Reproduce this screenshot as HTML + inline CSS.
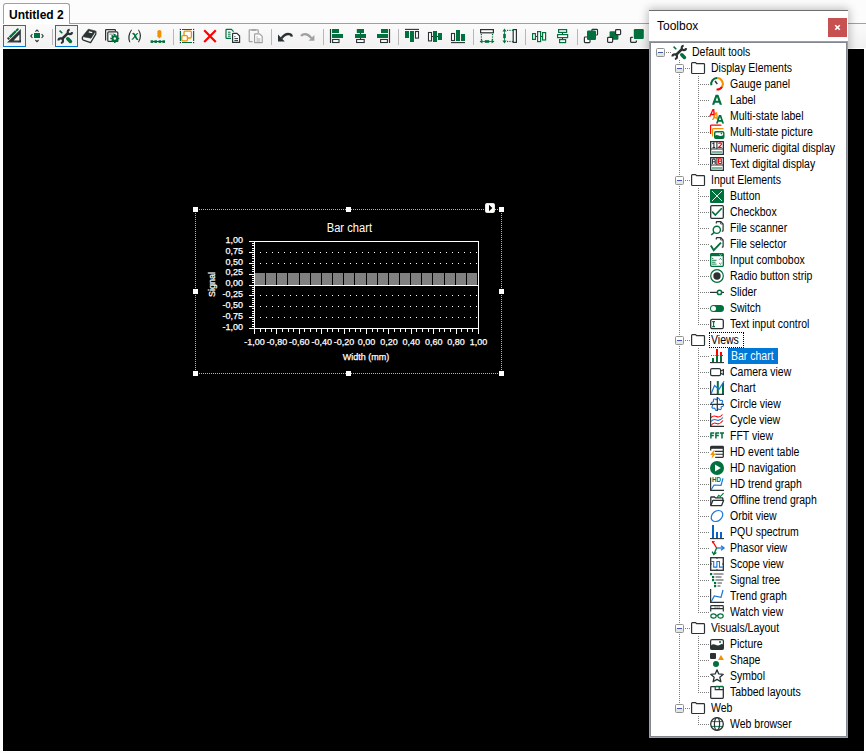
<!DOCTYPE html>
<html><head><meta charset="utf-8"><title>Untitled 2</title>
<style>
*{margin:0;padding:0;box-sizing:border-box}
html,body{width:866px;height:753px;overflow:hidden}
body{position:relative;background:#fcfcfc;font-family:"Liberation Sans",sans-serif;color:#000}
.a{position:absolute}
svg{position:absolute;overflow:visible}
.tab{left:3px;top:3px;width:67px;height:21px;border:1px solid #a0a0a0;border-bottom:none;border-radius:3px 3px 0 0;background:#fff}
.tabtxt{left:9px;top:7px;font-size:12px;font-weight:bold;line-height:16px;white-space:nowrap}
.strip{left:69px;top:23px;width:797px;height:1px;background:#a0a0a0}
.toolbar{left:0;top:24px;width:866px;height:24px;background:linear-gradient(#fbfbfb,#f1f1f1)}
.btnsel{width:23px;height:22px;top:25px;border:1px solid #0078d7;background:#f3f3f3}
.sep{top:29px;width:1px;height:16px;background:#b8b8b8}
.canvas{left:2px;top:48px;width:863px;height:704px;border:1px solid #fff;background:#000}
.win{left:649px;top:10px;width:199px;height:728px;background:#fff;border-top:1px solid #6e6e6e}
.wtitle{left:8px;top:7px;font-size:12px;line-height:16px}
.close{left:179px;top:7px;width:19px;height:19px;background:#c75050}
.tree{left:649px;top:41px;width:199px;height:697px;border:1px solid #a0a0a0;background:#fff}
.tree2{left:650px;top:42px;width:197px;height:695px;border:1px solid #828790}
.row{position:absolute;height:16px;line-height:16px;font-size:12px;white-space:nowrap;transform-origin:0 50%;transform:scaleX(0.875)}
.exp{position:absolute;width:9px;height:9px;border:1px solid #919191;border-radius:1.5px;background:linear-gradient(#fff 0,#fff 45%,#e4e4e4 55%,#e4e4e4)}
.exp::after{content:"";position:absolute;left:1px;top:3px;width:5px;height:1px;background:#3c5dae}
.vdot{position:absolute;width:1px;background:repeating-linear-gradient(#7a7a7a 0 1px,transparent 1px 2px)}
.hdot{position:absolute;height:1px;background:repeating-linear-gradient(90deg,#7a7a7a 0 1px,transparent 1px 2px)}
.sel{position:absolute;background:#0078d7}
</style></head><body>
<div class="a tab"></div>
<div class="a tabtxt">Untitled 2</div>
<div class="a strip"></div>
<div class="a toolbar"></div>
<div class="a btnsel" style="left:3px"></div>
<div class="a btnsel" style="left:55px"></div>

<div class="a sep" style="left:52px"></div>
<div class="a sep" style="left:173px"></div>
<div class="a sep" style="left:271px"></div>
<div class="a sep" style="left:323px"></div>
<div class="a sep" style="left:398px"></div>
<div class="a sep" style="left:473px"></div>
<div class="a sep" style="left:525px"></div>
<div class="a sep" style="left:577px"></div>
<svg width="16" height="16" viewBox="0 0 16 16" style="left:6px;top:28px"><path d="M1 14.6 H15 V1 Z M7.6 12.4 H13.4 V6.4 Z" fill="#2b3233" fill-rule="evenodd"/><path d="M3.6 9.4 L10 3" stroke="#00703c" stroke-width="2.4"/><path d="M10.8 2.2 L11.8 1.2" stroke="#00703c" stroke-width="2" stroke-linecap="round"/><path d="M1.8 11.2 L3.2 9.8" stroke="#2b3233" stroke-width="2.4"/><path d="M3 14.6 V13.6 M5 14.6 V13.6 M7 14.6 V13.6 M9 14.6 V13.6 M11 14.6 V13.6 M15 3 H14 M15 5 H14 M15 7 H14 M15 9 H14 M15 11 H14" stroke="#fff" stroke-width="0.6" opacity="0.6"/></svg>
<svg width="16" height="16" viewBox="0 0 16 16" style="left:29px;top:28px"><rect x="5" y="5" width="6" height="5" fill="#00703c"/><path d="M6.4 3.6 L8 2 L9.6 3.6 M3.4 6.2 L1.8 8 L3.4 9.8 M12.6 6.2 L14.2 8 L12.6 9.8 M6.4 12 L8 13.6 L9.6 12" stroke="#2b3233" stroke-width="1.1" fill="none"/></svg>
<svg width="16" height="16" viewBox="0 0 16 16" style="left:58px;top:28px"><path d="M1.6 2.6 L4.3 5.3" stroke="#00703c" stroke-width="1.5"/><path d="M9.8 10.8 L12.4 13.4" stroke="#00703c" stroke-width="3.6" stroke-linecap="round"/><path d="M4 11 L10.2 4.8" stroke="#2b3233" stroke-width="2.6"/><path d="M14.09 4.09 A2.2 2.2 0 1 1 11.71 1.71" stroke="#2b3233" stroke-width="2.1" fill="none"/><path d="M0.41 12.50 A2.3 2.3 0 1 1 2.90 14.99" stroke="#2b3233" stroke-width="2.1" fill="none"/></svg>
<svg width="16" height="16" viewBox="0 0 16 16" style="left:81px;top:28px"><path d="M1.4 8.6 L7.3 1.2 L14.7 3 L10 10.2 Z" fill="#2b3233" stroke="#2b3233" stroke-width="0.6" stroke-linejoin="round"/><path d="M1.6 8.8 Q0.7 11.4 2.4 12.2 L9.6 14.6 L14.8 6.2 V3.2" stroke="#2b3233" stroke-width="1.3" fill="none" stroke-linejoin="round"/><path d="M7.8 3.9 L11.2 4.7" stroke="#fff" stroke-width="1.3"/></svg>
<svg width="16" height="16" viewBox="0 0 16 16" style="left:104px;top:28px"><path d="M1.6 12.6 V2.2 Q1.6 1.6 2.2 1.6 H10.8 Q11.4 1.6 11.4 2.2 V3.6" stroke="#2b3233" stroke-width="1.2" fill="none"/><rect x="3.8" y="3.8" width="10" height="9.6" rx="1" fill="#fff" stroke="#2b3233" stroke-width="1.2"/><rect x="5.6" y="5.6" width="1" height="1" fill="#2b3233"/><rect x="7.4" y="5.6" width="1" height="1" fill="#2b3233"/><rect x="9.2" y="5.6" width="1" height="1" fill="#2b3233"/><circle cx="10.8" cy="10.5" r="3.2" fill="#00703c"/><rect x="10" y="6" width="1.6" height="1.8" fill="#00703c" transform="rotate(0 10.8 10.5)"/><rect x="10" y="6" width="1.6" height="1.8" fill="#00703c" transform="rotate(45 10.8 10.5)"/><rect x="10" y="6" width="1.6" height="1.8" fill="#00703c" transform="rotate(90 10.8 10.5)"/><rect x="10" y="6" width="1.6" height="1.8" fill="#00703c" transform="rotate(135 10.8 10.5)"/><rect x="10" y="6" width="1.6" height="1.8" fill="#00703c" transform="rotate(180 10.8 10.5)"/><rect x="10" y="6" width="1.6" height="1.8" fill="#00703c" transform="rotate(225 10.8 10.5)"/><rect x="10" y="6" width="1.6" height="1.8" fill="#00703c" transform="rotate(270 10.8 10.5)"/><rect x="10" y="6" width="1.6" height="1.8" fill="#00703c" transform="rotate(315 10.8 10.5)"/><circle cx="10.8" cy="10.5" r="1.2" fill="#fff"/></svg>
<svg width="16" height="16" viewBox="0 0 16 16" style="left:127px;top:28px"><path d="M4.1 1.8 Q-0.4 8 2.2 14.2 L3.3 14.2 Q1.1 8 5.1 1.8 Z" fill="#2b3233"/><path d="M12 1.8 Q16 8 12 14.2 L10.9 14.2 Q14.6 8 11 1.8 Z" fill="#2b3233"/><path d="M5.6 6 Q6.8 5.2 7.6 6.6 L9.4 10.4 Q10 11.6 11 10.8" stroke="#00703c" stroke-width="1.7" fill="none"/><path d="M11 5.6 Q10.4 5.4 9.6 6.2 L6.4 10.4 Q5.6 11.4 4.8 11" stroke="#00703c" stroke-width="1.1" fill="none"/></svg>
<svg width="16" height="16" viewBox="0 0 16 16" style="left:150px;top:28px"><path d="M7.4 3.6 Q7.4 2 9.4 2 Q11.4 2 11.4 3.6 V8.6 L9.4 10.6 L7.4 8.6 Z" fill="#f29100"/><path d="M1 13.6 H15" stroke="#2b3233" stroke-width="1"/><rect x="0.6" y="12.3" width="2.6" height="2.6" fill="#00703c"/><rect x="4.4" y="12.3" width="2.6" height="2.6" fill="#00703c"/><rect x="8.6" y="12.3" width="2.6" height="2.6" fill="#00703c"/><rect x="12.4" y="12.3" width="2.6" height="2.6" fill="#00703c"/></svg>
<svg width="16" height="16" viewBox="0 0 16 16" style="left:179px;top:28px"><path d="M3 1.5 H13 M3 14.5 H13" stroke="#00703c" stroke-width="1.2"/><path d="M1.4 3 V13 M14.6 3 V13" stroke="#00703c" stroke-width="1.2"/><rect x="0.8" y="0.9" width="1.2" height="1.2" fill="#2b3233"/><rect x="14" y="0.9" width="1.2" height="1.2" fill="#2b3233"/><rect x="0.8" y="14" width="1.2" height="1.2" fill="#2b3233"/><rect x="14" y="14" width="1.2" height="1.2" fill="#2b3233"/><rect x="5" y="3.2" width="7.4" height="6.8" rx="1.2" fill="#fff" stroke="#f29100" stroke-width="1.3"/><rect x="2.8" y="7.6" width="5.6" height="5.2" rx="1" fill="#fff" stroke="#f29100" stroke-width="1.3"/></svg>
<svg width="16" height="16" viewBox="0 0 16 16" style="left:202px;top:28px"><path d="M2.2 2.2 L13.8 14 M13.8 2.2 L2.2 14" stroke="#f00" stroke-width="2.2"/></svg>
<svg width="16" height="16" viewBox="0 0 16 16" style="left:225px;top:28px"><path d="M6 10.4 H1.6 Q1 10.4 1 9.8 V2 Q1 1.4 1.6 1.4 H6.4 L8.6 3.6" stroke="#00703c" stroke-width="1.2" fill="none"/><path d="M3 4.2 H5.6 M3 6.2 H5.6 M3 8.2 H5.6" stroke="#00703c" stroke-width="1"/><path d="M7.6 14.4 V6 Q7.6 5.4 8.2 5.4 H12 L14.6 8 V14.4 Z" fill="#fff" stroke="#2b3233" stroke-width="1.2" stroke-linejoin="round"/><path d="M9.4 8.6 H10.4 M9.4 10.6 H13 M9.4 12.6 H13" stroke="#2b3233" stroke-width="1"/></svg>
<svg width="16" height="16" viewBox="0 0 16 16" style="left:248px;top:28px"><path d="M4.6 13.6 H1.8 Q1.2 13.6 1.2 13 V2.4 Q1.2 1.8 1.8 1.8 H9.6 Q10.2 1.8 10.2 2.4 V5" stroke="#a0a0a0" stroke-width="1.2" fill="none"/><path d="M3.6 2 H8 " stroke="#a0a0a0" stroke-width="1.6"/><path d="M6.6 14.6 V6.4 Q6.6 5.8 7.2 5.8 H11.6 L14.2 8.4 V14.6 Z" fill="#fff" stroke="#a0a0a0" stroke-width="1.2" stroke-linejoin="round"/><path d="M8.4 9 H9.6 M8.4 11 H12.4 M8.4 13 H12.4" stroke="#a0a0a0" stroke-width="1"/></svg>
<svg width="16" height="16" viewBox="0 0 16 16" style="left:277px;top:28px"><path d="M4.6 10.2 Q8.6 4.6 13.4 6.4 Q14.6 7 14.8 8.6" stroke="#2b3233" stroke-width="2.4" fill="none"/><path d="M1 6.6 V13.4 H7.8 Z" fill="#2b3233"/></svg>
<svg width="16" height="16" viewBox="0 0 16 16" style="left:300px;top:28px"><path d="M11.4 10.2 Q7.4 5 2.8 6.6 Q1.6 7.2 1.4 8.2" stroke="#a0a0a0" stroke-width="2.2" fill="none"/><path d="M14.4 7 V12.8 H8.6 Z" fill="#a0a0a0"/></svg>
<svg width="16" height="16" viewBox="0 0 16 16" style="left:329px;top:28px"><path d="M1.5 1 V15" stroke="#2b3233" stroke-width="1.2"/><rect x="3" y="1" width="7" height="4" fill="#00703c"/><rect x="3" y="6" width="11" height="4" fill="#00703c"/><rect x="3.6" y="11.5" width="6.4" height="3" fill="#fff" stroke="#2b3233" stroke-width="1.1"/></svg>
<svg width="16" height="16" viewBox="0 0 16 16" style="left:352px;top:28px"><path d="M8.5 4 V12" stroke="#2b3233" stroke-width="1.1"/><rect x="4.8" y="1" width="7.2" height="4" fill="#00703c"/><rect x="3" y="6" width="11" height="4" fill="#00703c"/><rect x="4.6" y="11.5" width="7.6" height="3" fill="#fff" stroke="#2b3233" stroke-width="1.1"/></svg>
<svg width="16" height="16" viewBox="0 0 16 16" style="left:375px;top:28px"><path d="M14.5 1 V15" stroke="#2b3233" stroke-width="1.2"/><rect x="6" y="1" width="7" height="4" fill="#00703c"/><rect x="2" y="6" width="11" height="4" fill="#00703c"/><rect x="5.6" y="11.5" width="6.8" height="3" fill="#fff" stroke="#2b3233" stroke-width="1.1"/></svg>
<svg width="16" height="16" viewBox="0 0 16 16" style="left:404px;top:28px"><path d="M1 1.4 H15" stroke="#2b3233" stroke-width="1.1"/><rect x="1" y="3" width="4" height="7" fill="#00703c"/><rect x="6" y="3" width="4" height="11" fill="#00703c"/><rect x="11.5" y="3.5" width="3" height="6.6" fill="#fff" stroke="#2b3233" stroke-width="1.1"/></svg>
<svg width="16" height="16" viewBox="0 0 16 16" style="left:427px;top:28px"><path d="M4 8.5 H12" stroke="#2b3233" stroke-width="1.1"/><rect x="1.5" y="4.5" width="3" height="8.4" fill="#fff" stroke="#2b3233" stroke-width="1.1"/><rect x="6" y="3" width="4" height="11" fill="#00703c"/><rect x="11" y="5" width="4" height="7" fill="#00703c"/></svg>
<svg width="16" height="16" viewBox="0 0 16 16" style="left:450px;top:28px"><path d="M1 14.6 H15" stroke="#2b3233" stroke-width="1.1"/><rect x="1.5" y="5.5" width="3" height="7" fill="#fff" stroke="#2b3233" stroke-width="1.1"/><rect x="6" y="2" width="4" height="11" fill="#00703c"/><rect x="11" y="6" width="4" height="7" fill="#00703c"/></svg>
<svg width="16" height="16" viewBox="0 0 16 16" style="left:479px;top:28px"><rect x="1.6" y="1.6" width="12.8" height="3.2" fill="#fff" stroke="#2b3233" stroke-width="1.2"/><rect x="1.8" y="6" width="1.2" height="1.2" fill="#00703c"/><rect x="1.8" y="8.4" width="1.2" height="1.2" fill="#00703c"/><rect x="1.8" y="10.8" width="1.2" height="1.2" fill="#00703c"/><rect x="12.9" y="6" width="1.2" height="1.2" fill="#00703c"/><rect x="12.9" y="8.4" width="1.2" height="1.2" fill="#00703c"/><rect x="12.9" y="10.8" width="1.2" height="1.2" fill="#00703c"/><path d="M3 13.5 H13" stroke="#00703c" stroke-width="0.8"/><path d="M0.6 13.5 L3.4 11.4 V15.6 Z M15.4 13.5 L12.6 11.4 V15.6 Z" fill="#00703c"/><rect x="5.8" y="12.2" width="4.4" height="2.6" fill="#00703c"/></svg>
<svg width="16" height="16" viewBox="0 0 16 16" style="left:502px;top:28px"><rect x="11.2" y="1.6" width="3.2" height="12.8" fill="#fff" stroke="#2b3233" stroke-width="1.2"/><rect x="5" y="1.8" width="1.2" height="1.2" fill="#00703c"/><rect x="7.4" y="1.8" width="1.2" height="1.2" fill="#00703c"/><rect x="9.8" y="1.8" width="1.2" height="1.2" fill="#00703c"/><rect x="5" y="12.9" width="1.2" height="1.2" fill="#00703c"/><rect x="7.4" y="12.9" width="1.2" height="1.2" fill="#00703c"/><rect x="9.8" y="12.9" width="1.2" height="1.2" fill="#00703c"/><path d="M2.5 3 V13" stroke="#00703c" stroke-width="0.8"/><path d="M2.5 0.6 L0.4 3.4 H4.6 Z M2.5 15.4 L0.4 12.6 H4.6 Z" fill="#00703c"/><rect x="1.2" y="5.8" width="2.6" height="4.4" fill="#00703c"/></svg>
<svg width="16" height="16" viewBox="0 0 16 16" style="left:531px;top:28px"><path d="M4.5 8.5 H6 M10 8.5 H11" stroke="#2b3233" stroke-width="1.1"/><rect x="1.6" y="5.6" width="2.8" height="5.8" fill="#fff" stroke="#00703c" stroke-width="1.2"/><rect x="6.6" y="3.6" width="3" height="10" fill="#fff" stroke="#00703c" stroke-width="1.2"/><rect x="11.6" y="4.6" width="3" height="7.4" fill="#fff" stroke="#00703c" stroke-width="1.2"/></svg>
<svg width="16" height="16" viewBox="0 0 16 16" style="left:554px;top:28px"><path d="M8.5 4.5 V6 M8.5 10 V11" stroke="#2b3233" stroke-width="1.1"/><rect x="4.6" y="1.6" width="8" height="2.8" fill="#fff" stroke="#00703c" stroke-width="1.2"/><rect x="3.6" y="6.6" width="10" height="3" fill="#fff" stroke="#00703c" stroke-width="1.2"/><rect x="5.6" y="11.6" width="6" height="3" fill="#fff" stroke="#00703c" stroke-width="1.2"/></svg>
<svg width="16" height="16" viewBox="0 0 16 16" style="left:583px;top:28px"><rect x="8.9" y="1.4" width="5.6" height="5.6" rx="0.8" fill="#fff" stroke="#2b3233" stroke-width="1.2"/><rect x="1.4" y="9" width="5.6" height="5.6" rx="0.8" fill="#fff" stroke="#2b3233" stroke-width="1.2"/><rect x="4" y="2.6" width="9" height="9.4" rx="1.2" fill="#00703c"/></svg>
<svg width="16" height="16" viewBox="0 0 16 16" style="left:606px;top:28px"><rect x="3.6" y="3.3" width="8.8" height="8.5" rx="1" fill="#00703c"/><rect x="9.6" y="1.6" width="5" height="5" rx="0.8" fill="#fff" stroke="#2b3233" stroke-width="1.2"/><rect x="1.6" y="9.4" width="5" height="5" rx="0.8" fill="#fff" stroke="#2b3233" stroke-width="1.2"/></svg>
<svg width="16" height="16" viewBox="0 0 16 16" style="left:629px;top:28px"><path d="M3.8 9.4 H2.4 Q1.6 9.4 1.6 10.2 V13.6 Q1.6 14.4 2.4 14.4 H6.6 Q7.4 14.4 7.4 13.6 V12.4" stroke="#2b3233" stroke-width="1.3" fill="none"/><rect x="4.8" y="1" width="10" height="10" rx="1.2" fill="#00703c"/></svg>
<div class="a canvas"></div>
<svg width="866" height="753" style="left:0;top:0" shape-rendering="crispEdges">
<path d="M195 209.5 H501 M195 373.5 H501" stroke="#b4b4b4" stroke-width="1" stroke-dasharray="1 1"/>
<path d="M195.5 209 V373 M501.5 209 V373" stroke="#b4b4b4" stroke-width="1" stroke-dasharray="1 1"/>
<rect x="193" y="207" width="5" height="5" fill="#fff"/>
<rect x="346" y="207" width="5" height="5" fill="#fff"/>
<rect x="499" y="207" width="5" height="5" fill="#fff"/>
<rect x="193" y="289" width="5" height="5" fill="#fff"/>
<rect x="499" y="289" width="5" height="5" fill="#fff"/>
<rect x="193" y="371" width="5" height="5" fill="#fff"/>
<rect x="346" y="371" width="5" height="5" fill="#fff"/>
<rect x="499" y="371" width="5" height="5" fill="#fff"/>
<rect x="485.5" y="203.5" width="9" height="9" rx="1.2" fill="#fff" stroke="#e8e8e0" shape-rendering="auto"/>
<path d="M489 204.8 L492.3 208 L489 211.2 Z" fill="#000" shape-rendering="auto"/>
<rect x="255.00" y="273" width="10.15" height="12" fill="#808080"/>
<rect x="266.15" y="273" width="10.15" height="12" fill="#808080"/>
<rect x="277.30" y="273" width="10.15" height="12" fill="#808080"/>
<rect x="288.45" y="273" width="10.15" height="12" fill="#808080"/>
<rect x="299.60" y="273" width="10.15" height="12" fill="#808080"/>
<rect x="310.75" y="273" width="10.15" height="12" fill="#808080"/>
<rect x="321.90" y="273" width="10.15" height="12" fill="#808080"/>
<rect x="333.05" y="273" width="10.15" height="12" fill="#808080"/>
<rect x="344.20" y="273" width="10.15" height="12" fill="#808080"/>
<rect x="355.35" y="273" width="10.15" height="12" fill="#808080"/>
<rect x="366.50" y="273" width="10.15" height="12" fill="#808080"/>
<rect x="377.65" y="273" width="10.15" height="12" fill="#808080"/>
<rect x="388.80" y="273" width="10.15" height="12" fill="#808080"/>
<rect x="399.95" y="273" width="10.15" height="12" fill="#808080"/>
<rect x="411.10" y="273" width="10.15" height="12" fill="#808080"/>
<rect x="422.25" y="273" width="10.15" height="12" fill="#808080"/>
<rect x="433.40" y="273" width="10.15" height="12" fill="#808080"/>
<rect x="444.55" y="273" width="10.15" height="12" fill="#808080"/>
<rect x="455.70" y="273" width="10.15" height="12" fill="#808080"/>
<rect x="466.85" y="273" width="10.15" height="12" fill="#808080"/>
<rect x="260" y="252" width="1" height="1" fill="#fff"/>
<rect x="266" y="252" width="1" height="1" fill="#fff"/>
<rect x="272" y="252" width="1" height="1" fill="#fff"/>
<rect x="278" y="252" width="1" height="1" fill="#fff"/>
<rect x="284" y="252" width="1" height="1" fill="#fff"/>
<rect x="290" y="252" width="1" height="1" fill="#fff"/>
<rect x="296" y="252" width="1" height="1" fill="#fff"/>
<rect x="302" y="252" width="1" height="1" fill="#fff"/>
<rect x="308" y="252" width="1" height="1" fill="#fff"/>
<rect x="314" y="252" width="1" height="1" fill="#fff"/>
<rect x="320" y="252" width="1" height="1" fill="#fff"/>
<rect x="326" y="252" width="1" height="1" fill="#fff"/>
<rect x="332" y="252" width="1" height="1" fill="#fff"/>
<rect x="338" y="252" width="1" height="1" fill="#fff"/>
<rect x="344" y="252" width="1" height="1" fill="#fff"/>
<rect x="350" y="252" width="1" height="1" fill="#fff"/>
<rect x="356" y="252" width="1" height="1" fill="#fff"/>
<rect x="362" y="252" width="1" height="1" fill="#fff"/>
<rect x="368" y="252" width="1" height="1" fill="#fff"/>
<rect x="374" y="252" width="1" height="1" fill="#fff"/>
<rect x="380" y="252" width="1" height="1" fill="#fff"/>
<rect x="386" y="252" width="1" height="1" fill="#fff"/>
<rect x="392" y="252" width="1" height="1" fill="#fff"/>
<rect x="398" y="252" width="1" height="1" fill="#fff"/>
<rect x="404" y="252" width="1" height="1" fill="#fff"/>
<rect x="410" y="252" width="1" height="1" fill="#fff"/>
<rect x="416" y="252" width="1" height="1" fill="#fff"/>
<rect x="422" y="252" width="1" height="1" fill="#fff"/>
<rect x="428" y="252" width="1" height="1" fill="#fff"/>
<rect x="434" y="252" width="1" height="1" fill="#fff"/>
<rect x="440" y="252" width="1" height="1" fill="#fff"/>
<rect x="446" y="252" width="1" height="1" fill="#fff"/>
<rect x="452" y="252" width="1" height="1" fill="#fff"/>
<rect x="458" y="252" width="1" height="1" fill="#fff"/>
<rect x="464" y="252" width="1" height="1" fill="#fff"/>
<rect x="470" y="252" width="1" height="1" fill="#fff"/>
<rect x="476" y="252" width="1" height="1" fill="#fff"/>
<rect x="260" y="263" width="1" height="1" fill="#fff"/>
<rect x="266" y="263" width="1" height="1" fill="#fff"/>
<rect x="272" y="263" width="1" height="1" fill="#fff"/>
<rect x="278" y="263" width="1" height="1" fill="#fff"/>
<rect x="284" y="263" width="1" height="1" fill="#fff"/>
<rect x="290" y="263" width="1" height="1" fill="#fff"/>
<rect x="296" y="263" width="1" height="1" fill="#fff"/>
<rect x="302" y="263" width="1" height="1" fill="#fff"/>
<rect x="308" y="263" width="1" height="1" fill="#fff"/>
<rect x="314" y="263" width="1" height="1" fill="#fff"/>
<rect x="320" y="263" width="1" height="1" fill="#fff"/>
<rect x="326" y="263" width="1" height="1" fill="#fff"/>
<rect x="332" y="263" width="1" height="1" fill="#fff"/>
<rect x="338" y="263" width="1" height="1" fill="#fff"/>
<rect x="344" y="263" width="1" height="1" fill="#fff"/>
<rect x="350" y="263" width="1" height="1" fill="#fff"/>
<rect x="356" y="263" width="1" height="1" fill="#fff"/>
<rect x="362" y="263" width="1" height="1" fill="#fff"/>
<rect x="368" y="263" width="1" height="1" fill="#fff"/>
<rect x="374" y="263" width="1" height="1" fill="#fff"/>
<rect x="380" y="263" width="1" height="1" fill="#fff"/>
<rect x="386" y="263" width="1" height="1" fill="#fff"/>
<rect x="392" y="263" width="1" height="1" fill="#fff"/>
<rect x="398" y="263" width="1" height="1" fill="#fff"/>
<rect x="404" y="263" width="1" height="1" fill="#fff"/>
<rect x="410" y="263" width="1" height="1" fill="#fff"/>
<rect x="416" y="263" width="1" height="1" fill="#fff"/>
<rect x="422" y="263" width="1" height="1" fill="#fff"/>
<rect x="428" y="263" width="1" height="1" fill="#fff"/>
<rect x="434" y="263" width="1" height="1" fill="#fff"/>
<rect x="440" y="263" width="1" height="1" fill="#fff"/>
<rect x="446" y="263" width="1" height="1" fill="#fff"/>
<rect x="452" y="263" width="1" height="1" fill="#fff"/>
<rect x="458" y="263" width="1" height="1" fill="#fff"/>
<rect x="464" y="263" width="1" height="1" fill="#fff"/>
<rect x="470" y="263" width="1" height="1" fill="#fff"/>
<rect x="476" y="263" width="1" height="1" fill="#fff"/>
<rect x="260" y="295" width="1" height="1" fill="#fff"/>
<rect x="266" y="295" width="1" height="1" fill="#fff"/>
<rect x="272" y="295" width="1" height="1" fill="#fff"/>
<rect x="278" y="295" width="1" height="1" fill="#fff"/>
<rect x="284" y="295" width="1" height="1" fill="#fff"/>
<rect x="290" y="295" width="1" height="1" fill="#fff"/>
<rect x="296" y="295" width="1" height="1" fill="#fff"/>
<rect x="302" y="295" width="1" height="1" fill="#fff"/>
<rect x="308" y="295" width="1" height="1" fill="#fff"/>
<rect x="314" y="295" width="1" height="1" fill="#fff"/>
<rect x="320" y="295" width="1" height="1" fill="#fff"/>
<rect x="326" y="295" width="1" height="1" fill="#fff"/>
<rect x="332" y="295" width="1" height="1" fill="#fff"/>
<rect x="338" y="295" width="1" height="1" fill="#fff"/>
<rect x="344" y="295" width="1" height="1" fill="#fff"/>
<rect x="350" y="295" width="1" height="1" fill="#fff"/>
<rect x="356" y="295" width="1" height="1" fill="#fff"/>
<rect x="362" y="295" width="1" height="1" fill="#fff"/>
<rect x="368" y="295" width="1" height="1" fill="#fff"/>
<rect x="374" y="295" width="1" height="1" fill="#fff"/>
<rect x="380" y="295" width="1" height="1" fill="#fff"/>
<rect x="386" y="295" width="1" height="1" fill="#fff"/>
<rect x="392" y="295" width="1" height="1" fill="#fff"/>
<rect x="398" y="295" width="1" height="1" fill="#fff"/>
<rect x="404" y="295" width="1" height="1" fill="#fff"/>
<rect x="410" y="295" width="1" height="1" fill="#fff"/>
<rect x="416" y="295" width="1" height="1" fill="#fff"/>
<rect x="422" y="295" width="1" height="1" fill="#fff"/>
<rect x="428" y="295" width="1" height="1" fill="#fff"/>
<rect x="434" y="295" width="1" height="1" fill="#fff"/>
<rect x="440" y="295" width="1" height="1" fill="#fff"/>
<rect x="446" y="295" width="1" height="1" fill="#fff"/>
<rect x="452" y="295" width="1" height="1" fill="#fff"/>
<rect x="458" y="295" width="1" height="1" fill="#fff"/>
<rect x="464" y="295" width="1" height="1" fill="#fff"/>
<rect x="470" y="295" width="1" height="1" fill="#fff"/>
<rect x="476" y="295" width="1" height="1" fill="#fff"/>
<rect x="260" y="306" width="1" height="1" fill="#fff"/>
<rect x="266" y="306" width="1" height="1" fill="#fff"/>
<rect x="272" y="306" width="1" height="1" fill="#fff"/>
<rect x="278" y="306" width="1" height="1" fill="#fff"/>
<rect x="284" y="306" width="1" height="1" fill="#fff"/>
<rect x="290" y="306" width="1" height="1" fill="#fff"/>
<rect x="296" y="306" width="1" height="1" fill="#fff"/>
<rect x="302" y="306" width="1" height="1" fill="#fff"/>
<rect x="308" y="306" width="1" height="1" fill="#fff"/>
<rect x="314" y="306" width="1" height="1" fill="#fff"/>
<rect x="320" y="306" width="1" height="1" fill="#fff"/>
<rect x="326" y="306" width="1" height="1" fill="#fff"/>
<rect x="332" y="306" width="1" height="1" fill="#fff"/>
<rect x="338" y="306" width="1" height="1" fill="#fff"/>
<rect x="344" y="306" width="1" height="1" fill="#fff"/>
<rect x="350" y="306" width="1" height="1" fill="#fff"/>
<rect x="356" y="306" width="1" height="1" fill="#fff"/>
<rect x="362" y="306" width="1" height="1" fill="#fff"/>
<rect x="368" y="306" width="1" height="1" fill="#fff"/>
<rect x="374" y="306" width="1" height="1" fill="#fff"/>
<rect x="380" y="306" width="1" height="1" fill="#fff"/>
<rect x="386" y="306" width="1" height="1" fill="#fff"/>
<rect x="392" y="306" width="1" height="1" fill="#fff"/>
<rect x="398" y="306" width="1" height="1" fill="#fff"/>
<rect x="404" y="306" width="1" height="1" fill="#fff"/>
<rect x="410" y="306" width="1" height="1" fill="#fff"/>
<rect x="416" y="306" width="1" height="1" fill="#fff"/>
<rect x="422" y="306" width="1" height="1" fill="#fff"/>
<rect x="428" y="306" width="1" height="1" fill="#fff"/>
<rect x="434" y="306" width="1" height="1" fill="#fff"/>
<rect x="440" y="306" width="1" height="1" fill="#fff"/>
<rect x="446" y="306" width="1" height="1" fill="#fff"/>
<rect x="452" y="306" width="1" height="1" fill="#fff"/>
<rect x="458" y="306" width="1" height="1" fill="#fff"/>
<rect x="464" y="306" width="1" height="1" fill="#fff"/>
<rect x="470" y="306" width="1" height="1" fill="#fff"/>
<rect x="476" y="306" width="1" height="1" fill="#fff"/>
<rect x="260" y="317" width="1" height="1" fill="#fff"/>
<rect x="266" y="317" width="1" height="1" fill="#fff"/>
<rect x="272" y="317" width="1" height="1" fill="#fff"/>
<rect x="278" y="317" width="1" height="1" fill="#fff"/>
<rect x="284" y="317" width="1" height="1" fill="#fff"/>
<rect x="290" y="317" width="1" height="1" fill="#fff"/>
<rect x="296" y="317" width="1" height="1" fill="#fff"/>
<rect x="302" y="317" width="1" height="1" fill="#fff"/>
<rect x="308" y="317" width="1" height="1" fill="#fff"/>
<rect x="314" y="317" width="1" height="1" fill="#fff"/>
<rect x="320" y="317" width="1" height="1" fill="#fff"/>
<rect x="326" y="317" width="1" height="1" fill="#fff"/>
<rect x="332" y="317" width="1" height="1" fill="#fff"/>
<rect x="338" y="317" width="1" height="1" fill="#fff"/>
<rect x="344" y="317" width="1" height="1" fill="#fff"/>
<rect x="350" y="317" width="1" height="1" fill="#fff"/>
<rect x="356" y="317" width="1" height="1" fill="#fff"/>
<rect x="362" y="317" width="1" height="1" fill="#fff"/>
<rect x="368" y="317" width="1" height="1" fill="#fff"/>
<rect x="374" y="317" width="1" height="1" fill="#fff"/>
<rect x="380" y="317" width="1" height="1" fill="#fff"/>
<rect x="386" y="317" width="1" height="1" fill="#fff"/>
<rect x="392" y="317" width="1" height="1" fill="#fff"/>
<rect x="398" y="317" width="1" height="1" fill="#fff"/>
<rect x="404" y="317" width="1" height="1" fill="#fff"/>
<rect x="410" y="317" width="1" height="1" fill="#fff"/>
<rect x="416" y="317" width="1" height="1" fill="#fff"/>
<rect x="422" y="317" width="1" height="1" fill="#fff"/>
<rect x="428" y="317" width="1" height="1" fill="#fff"/>
<rect x="434" y="317" width="1" height="1" fill="#fff"/>
<rect x="440" y="317" width="1" height="1" fill="#fff"/>
<rect x="446" y="317" width="1" height="1" fill="#fff"/>
<rect x="452" y="317" width="1" height="1" fill="#fff"/>
<rect x="458" y="317" width="1" height="1" fill="#fff"/>
<rect x="464" y="317" width="1" height="1" fill="#fff"/>
<rect x="470" y="317" width="1" height="1" fill="#fff"/>
<rect x="476" y="317" width="1" height="1" fill="#fff"/>
<path d="M249 241.5 H479 M478.5 241 V329 M249 328.5 H479 M254.5 241 V334 M249 285.5 H479" stroke="#fff" stroke-width="1"/>
<path d="M249 241.5 H254 M251.5 243.5 H254 M251.5 245.5 H254 M251.5 248.5 H254 M251.5 250.5 H254 M249 252.5 H254 M251.5 254.5 H254 M251.5 256.5 H254 M251.5 258.5 H254 M251.5 261.5 H254 M249 263.5 H254 M251.5 265.5 H254 M251.5 267.5 H254 M251.5 269.5 H254 M251.5 271.5 H254 M249 274.5 H254 M251.5 276.5 H254 M251.5 278.5 H254 M251.5 280.5 H254 M251.5 282.5 H254 M249 285.5 H254 M251.5 287.5 H254 M251.5 289.5 H254 M251.5 291.5 H254 M251.5 293.5 H254 M249 295.5 H254 M251.5 298.5 H254 M251.5 300.5 H254 M251.5 302.5 H254 M251.5 304.5 H254 M249 306.5 H254 M251.5 308.5 H254 M251.5 311.5 H254 M251.5 313.5 H254 M251.5 315.5 H254 M249 317.5 H254 M251.5 319.5 H254 M251.5 321.5 H254 M251.5 324.5 H254 M251.5 326.5 H254 M249 328.5 H254 M254.5 329 V334 M260.5 329 V332 M265.5 329 V332 M271.5 329 V332 M276.5 329 V334 M282.5 329 V332 M288.5 329 V332 M293.5 329 V332 M299.5 329 V334 M304.5 329 V332 M310.5 329 V332 M316.5 329 V332 M321.5 329 V334 M327.5 329 V332 M332.5 329 V332 M338.5 329 V332 M344.5 329 V334 M349.5 329 V332 M355.5 329 V332 M360.5 329 V332 M366.5 329 V334 M372.5 329 V332 M377.5 329 V332 M383.5 329 V332 M388.5 329 V334 M394.5 329 V332 M400.5 329 V332 M405.5 329 V332 M411.5 329 V334 M416.5 329 V332 M422.5 329 V332 M428.5 329 V332 M433.5 329 V334 M439.5 329 V332 M444.5 329 V332 M450.5 329 V332 M456.5 329 V334 M461.5 329 V332 M467.5 329 V332 M472.5 329 V332 M478.5 329 V334" stroke="#fff" stroke-width="1"/>
</svg>
<div class="a" style="left:299px;top:220.6px;width:100px;text-align:center;color:#fff;font-size:12px;line-height:14px;white-space:nowrap"><span style="display:inline-block;transform:scaleX(0.93)">Bar chart</span></div>
<div class="a" style="left:203px;top:234.8px;width:40px;text-align:right;color:#fff;font-size:9px;line-height:11px;white-space:nowrap;-webkit-text-stroke:0.25px #fff">1,00</div>
<div class="a" style="left:203px;top:245.7px;width:40px;text-align:right;color:#fff;font-size:9px;line-height:11px;white-space:nowrap;-webkit-text-stroke:0.25px #fff">0,75</div>
<div class="a" style="left:203px;top:256.6px;width:40px;text-align:right;color:#fff;font-size:9px;line-height:11px;white-space:nowrap;-webkit-text-stroke:0.25px #fff">0,50</div>
<div class="a" style="left:203px;top:267.4px;width:40px;text-align:right;color:#fff;font-size:9px;line-height:11px;white-space:nowrap;-webkit-text-stroke:0.25px #fff">0,25</div>
<div class="a" style="left:203px;top:278.3px;width:40px;text-align:right;color:#fff;font-size:9px;line-height:11px;white-space:nowrap;-webkit-text-stroke:0.25px #fff">0,00</div>
<div class="a" style="left:203px;top:289.2px;width:40px;text-align:right;color:#fff;font-size:9px;line-height:11px;white-space:nowrap;-webkit-text-stroke:0.25px #fff">-0,25</div>
<div class="a" style="left:203px;top:300.1px;width:40px;text-align:right;color:#fff;font-size:9px;line-height:11px;white-space:nowrap;-webkit-text-stroke:0.25px #fff">-0,50</div>
<div class="a" style="left:203px;top:310.9px;width:40px;text-align:right;color:#fff;font-size:9px;line-height:11px;white-space:nowrap;-webkit-text-stroke:0.25px #fff">-0,75</div>
<div class="a" style="left:203px;top:321.8px;width:40px;text-align:right;color:#fff;font-size:9px;line-height:11px;white-space:nowrap;-webkit-text-stroke:0.25px #fff">-1,00</div>
<div class="a" style="left:234.5px;top:337.4px;width:40px;text-align:center;color:#fff;font-size:9px;line-height:11px;white-space:nowrap;-webkit-text-stroke:0.25px #fff">-1,00</div>
<div class="a" style="left:256.9px;top:337.4px;width:40px;text-align:center;color:#fff;font-size:9px;line-height:11px;white-space:nowrap;-webkit-text-stroke:0.25px #fff">-0,80</div>
<div class="a" style="left:279.3px;top:337.4px;width:40px;text-align:center;color:#fff;font-size:9px;line-height:11px;white-space:nowrap;-webkit-text-stroke:0.25px #fff">-0,60</div>
<div class="a" style="left:301.7px;top:337.4px;width:40px;text-align:center;color:#fff;font-size:9px;line-height:11px;white-space:nowrap;-webkit-text-stroke:0.25px #fff">-0,40</div>
<div class="a" style="left:324.1px;top:337.4px;width:40px;text-align:center;color:#fff;font-size:9px;line-height:11px;white-space:nowrap;-webkit-text-stroke:0.25px #fff">-0,20</div>
<div class="a" style="left:346.5px;top:337.4px;width:40px;text-align:center;color:#fff;font-size:9px;line-height:11px;white-space:nowrap;-webkit-text-stroke:0.25px #fff">0,00</div>
<div class="a" style="left:368.9px;top:337.4px;width:40px;text-align:center;color:#fff;font-size:9px;line-height:11px;white-space:nowrap;-webkit-text-stroke:0.25px #fff">0,20</div>
<div class="a" style="left:391.3px;top:337.4px;width:40px;text-align:center;color:#fff;font-size:9px;line-height:11px;white-space:nowrap;-webkit-text-stroke:0.25px #fff">0,40</div>
<div class="a" style="left:413.7px;top:337.4px;width:40px;text-align:center;color:#fff;font-size:9px;line-height:11px;white-space:nowrap;-webkit-text-stroke:0.25px #fff">0,60</div>
<div class="a" style="left:436.1px;top:337.4px;width:40px;text-align:center;color:#fff;font-size:9px;line-height:11px;white-space:nowrap;-webkit-text-stroke:0.25px #fff">0,80</div>
<div class="a" style="left:458.5px;top:337.4px;width:40px;text-align:center;color:#fff;font-size:9px;line-height:11px;white-space:nowrap;-webkit-text-stroke:0.25px #fff">1,00</div>
<div class="a" style="left:316px;top:352.2px;width:100px;text-align:center;color:#fff;font-size:9px;line-height:11px;white-space:nowrap;-webkit-text-stroke:0.25px #fff">Width (mm)</div>
<div class="a" style="left:186.5px;top:278.9px;width:50px;text-align:center;color:#fff;font-size:9px;line-height:11px;white-space:nowrap;-webkit-text-stroke:0.25px #fff;transform:rotate(-90deg)">Signal</div>
<div class="a" style="left:649px;top:10px;width:199px;height:728px;box-shadow:0 0 9px 1px rgba(0,0,0,0.28)"></div>
<div class="a win"><div class="a wtitle">Toolbox</div><div class="a close"><svg width="19" height="19" style="left:0;top:0"><path d="M7.2 7.2 L11.8 11.8 M11.8 7.2 L7.2 11.8" stroke="#fff" stroke-width="1.6"/></svg></div></div>
<div class="a tree"></div><div class="a tree2"></div>
<div class="vdot" style="left:679px;top:60px;height:649px"></div>
<div class="vdot" style="left:698px;top:76px;height:89px"></div>
<div class="vdot" style="left:698px;top:188px;height:137px"></div>
<div class="vdot" style="left:698px;top:348px;height:265px"></div>
<div class="vdot" style="left:698px;top:636px;height:57px"></div>
<div class="vdot" style="left:698px;top:716px;height:9px"></div>
<div class="hdot" style="left:666px;top:52px;width:6px"></div>
<div class="exp" style="left:656px;top:48px"></div>
<svg width="16" height="16" viewBox="0 0 16 16" style="left:672px;top:44px"><path d="M1.6 2.6 L4.3 5.3" stroke="#00703c" stroke-width="1.5"/><path d="M9.8 10.8 L12.4 13.4" stroke="#00703c" stroke-width="3.6" stroke-linecap="round"/><path d="M4 11 L10.2 4.8" stroke="#2b3233" stroke-width="2.6"/><path d="M14.09 4.09 A2.2 2.2 0 1 1 11.71 1.71" stroke="#2b3233" stroke-width="2.1" fill="none"/><path d="M0.41 12.50 A2.3 2.3 0 1 1 2.90 14.99" stroke="#2b3233" stroke-width="2.1" fill="none"/></svg>
<div class="row" style="left:692px;top:44px">Default tools</div>
<div class="hdot" style="left:685px;top:68px;width:6px"></div>
<div class="exp" style="left:675px;top:64px"></div>
<svg width="16" height="16" viewBox="0 0 16 16" style="left:691px;top:60px"><path d="M0.6 12.5 V3.4 Q0.6 2.6 1.4 2.6 H4.6 L5.6 3.6 H12.7 Q13.5 3.6 13.5 4.4 V12.7 Q13.5 13.5 12.7 13.5 H1.4 Q0.6 13.5 0.6 12.7 Z" fill="#fff" stroke="#2b3233" stroke-width="1.2"/></svg>
<div class="row" style="left:711px;top:60px">Display Elements</div>
<div class="hdot" style="left:700px;top:84px;width:10px"></div>
<svg width="16" height="16" viewBox="0 0 16 16" style="left:710px;top:76px"><path d="M1.40 9.30 A5.8 5.8 0 0 1 7.00 2.00" stroke="#00703c" stroke-width="2" fill="none"/><path d="M7.00 2.00 A5.8 5.8 0 0 1 12.02 10.70" stroke="#f29100" stroke-width="2" fill="none"/><path d="M12.02 10.70 A5.8 5.8 0 0 1 6.49 13.58" stroke="#ff0000" stroke-width="2" fill="none"/><path d="M5 5 L7.3 8" stroke="#2b3233" stroke-width="1.4"/></svg>
<div class="row" style="left:730px;top:76px">Gauge panel</div>
<div class="hdot" style="left:700px;top:100px;width:10px"></div>
<svg width="16" height="16" viewBox="0 0 16 16" style="left:710px;top:92px"><path transform="translate(2,2.8)" d="M0 10 L3.6 0 H6.4 L10 10 H7.7 L7 8 H3 L2.3 10 Z M3.7 6 H6.3 L5 2.3 Z" fill="#00703c" fill-rule="evenodd"/></svg>
<div class="row" style="left:730px;top:92px">Label</div>
<div class="hdot" style="left:700px;top:116px;width:10px"></div>
<svg width="16" height="16" viewBox="0 0 16 16" style="left:710px;top:108px"><path transform="translate(0.3,1) scale(0.62,0.78) skewX(-12)" d="M0 10 L3.6 0 H6.4 L10 10 H7.7 L7 8 H3 L2.3 10 Z M3.7 6 H6.3 L5 2.3 Z" fill="#ff0000" fill-rule="evenodd"/><path transform="translate(3.3,4.2) scale(0.62,0.78) skewX(-12)" d="M0 10 L3.6 0 H6.4 L10 10 H7.7 L7 8 H3 L2.3 10 Z M3.7 6 H6.3 L5 2.3 Z" fill="#f29100" fill-rule="evenodd"/><path transform="translate(6,7) scale(0.8,0.85)" d="M0 10 L3.6 0 H6.4 L10 10 H7.7 L7 8 H3 L2.3 10 Z M3.7 6 H6.3 L5 2.3 Z" fill="#00703c" fill-rule="evenodd"/></svg>
<div class="row" style="left:730px;top:108px">Multi-state label</div>
<div class="hdot" style="left:700px;top:132px;width:10px"></div>
<svg width="16" height="16" viewBox="0 0 16 16" style="left:710px;top:124px"><path d="M0.6 10 V1.8 Q0.6 1.1 1.3 1.1 H10.3 Q11 1.1 11 1.8" stroke="#ff0000" stroke-width="1.2" fill="none"/><path d="M2.6 12.5 V5.2 Q2.6 4.6 3.2 4.6 H12.5 Q13.2 4.6 13.2 5.3" stroke="#f29100" stroke-width="1.2" fill="none"/><rect x="4.7" y="7.7" width="9.1" height="6.6" rx="1.2" fill="#fff" stroke="#00703c" stroke-width="1.4"/><path d="M4.7 12 Q6.5 10.2 8.5 11.6 Q10.5 12.8 13.8 10.8 V14.3 H4.7 Z" fill="#00703c"/><circle cx="11.4" cy="9.6" r="0.8" fill="#00703c"/></svg>
<div class="row" style="left:730px;top:124px">Multi-state picture</div>
<div class="hdot" style="left:700px;top:148px;width:10px"></div>
<svg width="16" height="16" viewBox="0 0 16 16" style="left:710px;top:140px"><rect x="0.65" y="1.65" width="12.7" height="12.7" fill="#fff" stroke="#2b3233" stroke-width="1.3"/><path d="M0.7 9 H13.3 M6.9 1.7 V9" stroke="#2b3233" stroke-width="1.1"/><path d="M2.4 3.8 L3.9 2.9 V7.6 M2.5 7.6 H5.2" stroke="#2b3233" stroke-width="1.1" fill="none"/><path d="M8.5 3.8 Q8.9 2.9 10.1 2.9 Q11.5 2.9 11.5 4.1 Q11.5 5.1 8.5 7.5 H11.8" stroke="#ff0000" stroke-width="1.1" fill="none"/><rect x="2" y="11.5" width="10" height="1" fill="#00703c"/></svg>
<div class="row" style="left:730px;top:140px">Numeric digital display</div>
<div class="hdot" style="left:700px;top:164px;width:10px"></div>
<svg width="16" height="16" viewBox="0 0 16 16" style="left:710px;top:156px"><rect x="0.65" y="1.65" width="12.7" height="12.7" fill="#fff" stroke="#2b3233" stroke-width="1.3"/><path d="M0.7 9 H13.3 M6.9 1.7 V9" stroke="#2b3233" stroke-width="1.1"/><path d="M2.4 7.9 V4.2 Q2.4 2.9 3.8 2.9 Q5.2 2.9 5.2 4.2 V7.9 M2.4 5.7 H5.2" stroke="#2b3233" stroke-width="1.1" fill="none"/><path d="M8.5 7.6 V2.9 H10.5 Q11.5 2.9 11.5 4 Q11.5 5.2 10.4 5.2 H8.5 M10.4 5.2 Q11.8 5.2 11.8 6.4 Q11.8 7.6 10.6 7.6 H8.5" stroke="#ff0000" stroke-width="1.1" fill="none"/><rect x="2" y="11.5" width="10" height="1" fill="#00703c"/></svg>
<div class="row" style="left:730px;top:156px">Text digital display</div>
<div class="hdot" style="left:685px;top:180px;width:6px"></div>
<div class="exp" style="left:675px;top:176px"></div>
<svg width="16" height="16" viewBox="0 0 16 16" style="left:691px;top:172px"><path d="M0.6 12.5 V3.4 Q0.6 2.6 1.4 2.6 H4.6 L5.6 3.6 H12.7 Q13.5 3.6 13.5 4.4 V12.7 Q13.5 13.5 12.7 13.5 H1.4 Q0.6 13.5 0.6 12.7 Z" fill="#fff" stroke="#2b3233" stroke-width="1.2"/></svg>
<div class="row" style="left:711px;top:172px">Input Elements</div>
<div class="hdot" style="left:700px;top:196px;width:10px"></div>
<svg width="16" height="16" viewBox="0 0 16 16" style="left:710px;top:188px"><rect x="0" y="1" width="14" height="14" rx="1" fill="#00703c"/><path d="M2 3 L12 13 M12 3 L2 13" stroke="#fff" stroke-width="0.9"/></svg>
<div class="row" style="left:730px;top:188px">Button</div>
<div class="hdot" style="left:700px;top:212px;width:10px"></div>
<svg width="16" height="16" viewBox="0 0 16 16" style="left:710px;top:204px"><rect x="0.7" y="1.7" width="12.6" height="12.6" rx="1" fill="#fff" stroke="#2b3233" stroke-width="1.3"/><path d="M2.2 7.6 L5.3 11 L11.8 4.2" stroke="#00703c" stroke-width="1.6" fill="none"/></svg>
<div class="row" style="left:730px;top:204px">Checkbox</div>
<div class="hdot" style="left:700px;top:228px;width:10px"></div>
<svg width="16" height="16" viewBox="0 0 16 16" style="left:710px;top:220px"><path d="M6.3 3.5 V2.2 Q6.3 1.6 6.9 1.6 H10.8 L13.1 3.9 V10.6 Q13.1 11.2 12.5 11.2 H11.8" stroke="#2b3233" stroke-width="1.2" fill="none"/><path d="M10.6 1.8 V4 H13" stroke="#2b3233" stroke-width="0.8" fill="none"/><circle cx="6.8" cy="9.8" r="3.6" stroke="#00703c" stroke-width="1.4" fill="none"/><path d="M4.3 12.3 L1.2 15" stroke="#00703c" stroke-width="1.6"/></svg>
<div class="row" style="left:730px;top:220px">File scanner</div>
<div class="hdot" style="left:700px;top:244px;width:10px"></div>
<svg width="16" height="16" viewBox="0 0 16 16" style="left:710px;top:236px"><path d="M6.3 3.5 V2.2 Q6.3 1.6 6.9 1.6 H10.8 L13.1 3.9 V10.6 Q13.1 11.2 12.5 11.2 H11.8" stroke="#2b3233" stroke-width="1.2" fill="none"/><path d="M10.6 1.8 V4 H13" stroke="#2b3233" stroke-width="0.8" fill="none"/><path d="M0.8 9.5 L3.7 14.2 L11 6.6" stroke="#00703c" stroke-width="1.8" fill="none"/></svg>
<div class="row" style="left:730px;top:236px">File selector</div>
<div class="hdot" style="left:700px;top:260px;width:10px"></div>
<svg width="16" height="16" viewBox="0 0 16 16" style="left:710px;top:252px"><rect x="0.7" y="1.7" width="12.6" height="12.6" rx="0.8" fill="#fff" stroke="#00703c" stroke-width="1.3"/><rect x="0.7" y="1.7" width="12.6" height="2.5" fill="#00703c"/><path d="M9.5 2.4 L10.5 3.3 L11.5 2.4" stroke="#fff" stroke-width="0.8" fill="none"/><path d="M2 6.4 H3.3 M2 8.3 H6.5 M2 10.2 H5.5 M2 12.1 H6.5" stroke="#00703c" stroke-width="0.9"/><path d="M9.2 7.6 L10.4 6.4 L11.6 7.6 M9.2 11 L10.4 12.2 L11.6 11" stroke="#00703c" stroke-width="0.9" fill="none"/></svg>
<div class="row" style="left:730px;top:252px">Input combobox</div>
<div class="hdot" style="left:700px;top:276px;width:10px"></div>
<svg width="16" height="16" viewBox="0 0 16 16" style="left:710px;top:268px"><circle cx="7" cy="8" r="6.3" stroke="#00703c" stroke-width="1.2" fill="#fff"/><circle cx="7" cy="8" r="3.7" fill="#2b3233"/></svg>
<div class="row" style="left:730px;top:268px">Radio button strip</div>
<div class="hdot" style="left:700px;top:292px;width:10px"></div>
<svg width="16" height="16" viewBox="0 0 16 16" style="left:710px;top:284px"><path d="M0 8.4 H14" stroke="#2b3233" stroke-width="1.2"/><circle cx="9.5" cy="8.4" r="2.1" stroke="#00703c" stroke-width="1.5" fill="#fff"/></svg>
<div class="row" style="left:730px;top:284px">Slider</div>
<div class="hdot" style="left:700px;top:308px;width:10px"></div>
<svg width="16" height="16" viewBox="0 0 16 16" style="left:710px;top:300px"><rect x="0" y="5" width="14" height="7" rx="3.5" fill="#00703c"/><circle cx="3.5" cy="8.5" r="2.5" fill="#fff"/></svg>
<div class="row" style="left:730px;top:300px">Switch</div>
<div class="hdot" style="left:700px;top:324px;width:10px"></div>
<svg width="16" height="16" viewBox="0 0 16 16" style="left:710px;top:316px"><rect x="0.7" y="3.3" width="12.6" height="9.4" rx="1.5" fill="#fff" stroke="#2b3233" stroke-width="1.3"/><path d="M2.2 5.6 H5 M3.6 5.6 V10.6 M2.2 10.6 H5" stroke="#00703c" stroke-width="1.1"/></svg>
<div class="row" style="left:730px;top:316px">Text input control</div>
<div class="hdot" style="left:685px;top:340px;width:6px"></div>
<div class="exp" style="left:675px;top:336px"></div>
<svg width="16" height="16" viewBox="0 0 16 16" style="left:691px;top:332px"><path d="M0.6 12.5 V3.4 Q0.6 2.6 1.4 2.6 H4.6 L5.6 3.6 H12.7 Q13.5 3.6 13.5 4.4 V12.7 Q13.5 13.5 12.7 13.5 H1.4 Q0.6 13.5 0.6 12.7 Z" fill="#fff" stroke="#2b3233" stroke-width="1.2"/></svg>
<div class="a" style="left:709px;top:332px;width:35px;height:16px;border:1px dotted #000"></div>
<div class="row" style="left:711px;top:332px">Views</div>
<div class="hdot" style="left:700px;top:356px;width:10px"></div>
<svg width="16" height="16" viewBox="0 0 16 16" style="left:710px;top:348px"><rect x="2" y="10" width="2" height="4.5" fill="#00703c"/><rect x="6" y="8" width="2" height="6.5" fill="#00703c"/><rect x="10" y="8" width="2" height="6.5" fill="#00703c"/><rect x="6" y="1" width="2" height="7" fill="#ff0000"/><rect x="10" y="4" width="2" height="4" fill="#ff0000"/><path d="M1 7.5 H14" stroke="#ff0000" stroke-width="1" stroke-dasharray="1 1.2"/><path d="M0 14.6 H14" stroke="#2b3233" stroke-width="1.1"/></svg>
<div class="sel" style="left:728px;top:348px;width:50px;height:16px"></div>
<div class="row" style="left:731px;top:348px;color:#fff">Bar chart</div>
<div class="hdot" style="left:700px;top:372px;width:10px"></div>
<svg width="16" height="16" viewBox="0 0 16 16" style="left:710px;top:364px"><rect x="0.6" y="4.6" width="10" height="7" rx="1.4" fill="#fff" stroke="#2b3233" stroke-width="1.2"/><path d="M10.6 7 L13.4 5.6 V10.6 L10.6 9.2" stroke="#2b3233" stroke-width="1.2" fill="none"/></svg>
<div class="row" style="left:730px;top:364px">Camera view</div>
<div class="hdot" style="left:700px;top:388px;width:10px"></div>
<svg width="16" height="16" viewBox="0 0 16 16" style="left:710px;top:380px"><rect x="6.8" y="1" width="2" height="13.5" fill="#00703c"/><rect x="12" y="3" width="2" height="11.5" fill="#00703c"/><path d="M0.6 1 V14.4 H14" stroke="#2b3233" stroke-width="1.2" fill="none"/><path d="M1 14 L4.5 5.5 L9 9.3 L14 1.2" stroke="#1874d8" stroke-width="1.2" fill="none"/></svg>
<div class="row" style="left:730px;top:380px">Chart</div>
<div class="hdot" style="left:700px;top:404px;width:10px"></div>
<svg width="16" height="16" viewBox="0 0 16 16" style="left:710px;top:396px"><path d="M12.80 8.30 L13.26 8.82 L13.44 9.38 L13.24 9.89 L12.71 10.27 L12.05 10.52 L11.50 10.73 L11.20 11.03 L11.14 11.53 L11.19 12.19 L11.15 12.88 L10.88 13.41 L10.37 13.63 L9.73 13.52 L9.09 13.23 L8.56 12.99 L8.13 12.99 L7.74 13.30 L7.30 13.80 L6.78 14.26 L6.22 14.44 L5.71 14.24 L5.33 13.71 L5.08 13.05 L4.87 12.50 L4.57 12.20 L4.07 12.14 L3.41 12.19 L2.72 12.15 L2.19 11.88 L1.97 11.37 L2.08 10.73 L2.37 10.09 L2.61 9.56 L2.61 9.13 L2.30 8.74 L1.80 8.30 L1.34 7.78 L1.16 7.22 L1.36 6.71 L1.89 6.33 L2.55 6.08 L3.10 5.87 L3.40 5.57 L3.46 5.07 L3.41 4.41 L3.45 3.72 L3.72 3.19 L4.23 2.97 L4.87 3.08 L5.51 3.37 L6.04 3.61 L6.47 3.61 L6.86 3.30 L7.30 2.80 L7.82 2.34 L8.38 2.16 L8.89 2.36 L9.27 2.89 L9.52 3.55 L9.73 4.10 L10.03 4.40 L10.53 4.46 L11.19 4.41 L11.88 4.45 L12.41 4.72 L12.63 5.23 L12.52 5.87 L12.23 6.51 L11.99 7.04 L11.99 7.47 L12.30 7.86 L12.80 8.30Z" stroke="#1874d8" stroke-width="1.1" fill="none"/><path d="M0 8.3 H14 M7.3 1 V15" stroke="#2b3233" stroke-width="1.2"/></svg>
<div class="row" style="left:730px;top:396px">Circle view</div>
<div class="hdot" style="left:700px;top:420px;width:10px"></div>
<svg width="16" height="16" viewBox="0 0 16 16" style="left:710px;top:412px"><path d="M1 5.5 Q3.5 3 6.5 4.5 T12.5 2.5" stroke="#ff0000" stroke-width="1.1" fill="none"/><path d="M1 9.5 Q3.5 6.5 6.5 8 T13 5.5" stroke="#1874d8" stroke-width="1.1" fill="none"/><path d="M1 13.5 Q3.5 10 6.5 11.5 T13 8.5" stroke="#ff0000" stroke-width="1.1" fill="none"/><path d="M0.6 1 V14.4 H14" stroke="#2b3233" stroke-width="1.2" fill="none"/></svg>
<div class="row" style="left:730px;top:412px">Cycle view</div>
<div class="hdot" style="left:700px;top:436px;width:10px"></div>
<svg width="16" height="16" viewBox="0 0 16 16" style="left:710px;top:428px"><path d="M0.9 4.4 V10.4 M0.9 5.1 H4.2 M0.9 7.4 H3.8 M5.9 4.4 V10.4 M5.9 5.1 H9.2 M5.9 7.4 H8.8 M10 5.1 H14 M12 4.4 V10.4" stroke="#00703c" stroke-width="1.5" fill="none"/></svg>
<div class="row" style="left:730px;top:428px">FFT view</div>
<div class="hdot" style="left:700px;top:452px;width:10px"></div>
<svg width="16" height="16" viewBox="0 0 16 16" style="left:710px;top:444px"><path d="M0.7 6.4 V3.2 Q0.7 2.4 1.5 2.4 H12.5 Q13.3 2.4 13.3 3.2 V12.6 Q13.3 13.4 12.5 13.4 H5.2" stroke="#2b3233" stroke-width="1.3" fill="none"/><rect x="0.7" y="2.4" width="12.6" height="2.4" fill="#2b3233"/><path d="M4.8 7.4 H13 M5.4 10.2 H13" stroke="#2b3233" stroke-width="1.1"/><path d="M3.4 6.4 L0.2 11 H2.6 L1.4 14.8 L5.8 9.4 H3.4 L4.8 6.4 Z" fill="#f29100"/></svg>
<div class="row" style="left:730px;top:444px">HD event table</div>
<div class="hdot" style="left:700px;top:468px;width:10px"></div>
<svg width="16" height="16" viewBox="0 0 16 16" style="left:710px;top:460px"><circle cx="7" cy="8" r="7" fill="#00703c"/><path d="M5 4.6 L10.8 8 L5 11.4 Z" fill="#fff"/></svg>
<div class="row" style="left:730px;top:460px">HD navigation</div>
<div class="hdot" style="left:700px;top:484px;width:10px"></div>
<svg width="16" height="16" viewBox="0 0 16 16" style="left:710px;top:476px"><text x="2" y="6.3" font-family="Liberation Sans" font-weight="bold" font-size="6.8" fill="#00703c" textLength="9" lengthAdjust="spacingAndGlyphs">HD</text><path d="M0.6 1.5 V14.4 H14" stroke="#2b3233" stroke-width="1.2" fill="none"/><path d="M1 14 L4 9 L11 9.4 L13 2.4" stroke="#1874d8" stroke-width="1.2" fill="none"/></svg>
<div class="row" style="left:730px;top:476px">HD trend graph</div>
<div class="hdot" style="left:700px;top:500px;width:10px"></div>
<svg width="16" height="16" viewBox="0 0 16 16" style="left:710px;top:492px"><path d="M0.8 13.6 V5.6 Q0.8 5 1.4 5 H4.5 L5.4 5.9 H12.2 Q12.8 5.9 12.8 6.5 V8.4" stroke="#2b3233" stroke-width="1.3" fill="none"/><path d="M0.8 13.6 L2.8 8.4 H13.6 L11.6 13.6 Z" fill="#fff" stroke="#2b3233" stroke-width="1.3" stroke-linejoin="round"/><path d="M6.8 6 L8.8 3.4 L10.3 4.6 L13.6 1.2" stroke="#00703c" stroke-width="1.1" fill="none"/></svg>
<div class="row" style="left:730px;top:492px">Offline trend graph</div>
<div class="hdot" style="left:700px;top:516px;width:10px"></div>
<svg width="16" height="16" viewBox="0 0 16 16" style="left:710px;top:508px"><ellipse cx="7" cy="8" rx="6.4" ry="4.8" transform="rotate(-40 7 8)" stroke="#1874d8" stroke-width="1.2" fill="none"/></svg>
<div class="row" style="left:730px;top:508px">Orbit view</div>
<div class="hdot" style="left:700px;top:532px;width:10px"></div>
<svg width="16" height="16" viewBox="0 0 16 16" style="left:710px;top:524px"><rect x="2" y="1" width="2" height="13.5" fill="#0b63c9"/><rect x="6" y="8" width="2" height="6.5" fill="#0b63c9"/><rect x="10" y="8" width="2" height="6.5" fill="#0b63c9"/><path d="M0 14.6 H14" stroke="#2b3233" stroke-width="1.1"/></svg>
<div class="row" style="left:730px;top:524px">PQU spectrum</div>
<div class="hdot" style="left:700px;top:548px;width:10px"></div>
<svg width="16" height="16" viewBox="0 0 16 16" style="left:710px;top:540px"><path d="M6.6 8 L3 2" stroke="#ff0000" stroke-width="1.3"/><path d="M1.6 0.8 L5.2 1.4 L2.6 3.6 Z" fill="#ff0000"/><path d="M6.6 8 H13" stroke="#1874d8" stroke-width="1.3"/><path d="M11 5.8 L14 8 L11 10.2" stroke="#1874d8" stroke-width="1.3" fill="none"/><path d="M6.6 8 L4 14" stroke="#00703c" stroke-width="1.3"/><path d="M2.2 11.6 L3.8 14.6 L6.4 12.6" stroke="#00703c" stroke-width="1.3" fill="none"/></svg>
<div class="row" style="left:730px;top:540px">Phasor view</div>
<div class="hdot" style="left:700px;top:564px;width:10px"></div>
<svg width="16" height="16" viewBox="0 0 16 16" style="left:710px;top:556px"><rect x="0.7" y="1.7" width="12.6" height="12.6" fill="#fff" stroke="#2b3233" stroke-width="1.3"/><path d="M7 1.7 V3 M7 13 V14.3 M0.7 8 H2 M12 8 H13.3" stroke="#2b3233" stroke-width="1"/><path d="M1.2 5.5 H3.7 V11.1 H6.9 V5.5 H9.5 V11.1 H12.8" stroke="#1874d8" stroke-width="1.1" fill="none"/></svg>
<div class="row" style="left:730px;top:556px">Scope view</div>
<div class="hdot" style="left:700px;top:580px;width:10px"></div>
<svg width="16" height="16" viewBox="0 0 16 16" style="left:710px;top:572px"><rect x="0" y="1" width="2.2" height="2.2" fill="#00703c"/><rect x="2" y="4" width="2.2" height="2.2" fill="#00703c"/><rect x="2" y="7" width="2.2" height="2.2" fill="#00703c"/><rect x="4" y="10" width="2.2" height="2.2" fill="#00703c"/><rect x="4" y="13" width="2.2" height="2.2" fill="#00703c"/><path d="M3.5 2 H13.5 M5.5 5 H11.5 M5.5 8 H13.5 M7.5 11 H12 M7.5 14 H10.5" stroke="#2b3233" stroke-width="0.9"/></svg>
<div class="row" style="left:730px;top:572px">Signal tree</div>
<div class="hdot" style="left:700px;top:596px;width:10px"></div>
<svg width="16" height="16" viewBox="0 0 16 16" style="left:710px;top:588px"><path d="M0.6 1 V14.4 H14" stroke="#2b3233" stroke-width="1.2" fill="none"/><path d="M1 14 L4.3 8 L11 9.4 L13 2" stroke="#1874d8" stroke-width="1.2" fill="none"/></svg>
<div class="row" style="left:730px;top:588px">Trend graph</div>
<div class="hdot" style="left:700px;top:612px;width:10px"></div>
<svg width="16" height="16" viewBox="0 0 16 16" style="left:710px;top:604px"><path d="M0.7 7.4 V2.4 Q0.7 1.7 1.4 1.7 H12.6 Q13.3 1.7 13.3 2.4 V7.4 M0.7 4.6 H13.3" stroke="#2b3233" stroke-width="1.2" fill="none"/><rect x="4.6" y="2.6" width="1" height="1" fill="#2b3233"/><rect x="6.6" y="2.6" width="1" height="1" fill="#2b3233"/><rect x="8.6" y="2.6" width="1" height="1" fill="#2b3233"/><ellipse cx="3.5" cy="12" rx="2.7" ry="2.1" stroke="#00703c" stroke-width="1.2" fill="none"/><ellipse cx="10.5" cy="12" rx="2.7" ry="2.1" stroke="#00703c" stroke-width="1.2" fill="none"/><path d="M6.2 11.4 H7.8" stroke="#00703c" stroke-width="1.2"/></svg>
<div class="row" style="left:730px;top:604px">Watch view</div>
<div class="hdot" style="left:685px;top:628px;width:6px"></div>
<div class="exp" style="left:675px;top:624px"></div>
<svg width="16" height="16" viewBox="0 0 16 16" style="left:691px;top:620px"><path d="M0.6 12.5 V3.4 Q0.6 2.6 1.4 2.6 H4.6 L5.6 3.6 H12.7 Q13.5 3.6 13.5 4.4 V12.7 Q13.5 13.5 12.7 13.5 H1.4 Q0.6 13.5 0.6 12.7 Z" fill="#fff" stroke="#2b3233" stroke-width="1.2"/></svg>
<div class="row" style="left:711px;top:620px">Visuals/Layout</div>
<div class="hdot" style="left:700px;top:644px;width:10px"></div>
<svg width="16" height="16" viewBox="0 0 16 16" style="left:710px;top:636px"><rect x="0.6" y="3.6" width="12.8" height="9.8" rx="1.5" fill="#fff" stroke="#2b3233" stroke-width="1.2"/><path d="M0.6 9.8 Q3 7.5 5.5 8.8 Q8.5 10.3 10.5 8.5 Q12.3 7.5 13.4 8.8 V13.4 H0.6 Z" fill="#2b3233"/><circle cx="10" cy="6" r="1" fill="#00703c"/></svg>
<div class="row" style="left:730px;top:636px">Picture</div>
<div class="hdot" style="left:700px;top:660px;width:10px"></div>
<svg width="16" height="16" viewBox="0 0 16 16" style="left:710px;top:652px"><rect x="0" y="1" width="6" height="6" rx="1" fill="#2b3233"/><path d="M8 8 L11 3 L14 8 Z" fill="#f29100"/><circle cx="6" cy="12" r="3" fill="#00703c"/></svg>
<div class="row" style="left:730px;top:652px">Shape</div>
<div class="hdot" style="left:700px;top:676px;width:10px"></div>
<svg width="16" height="16" viewBox="0 0 16 16" style="left:710px;top:668px"><path d="M7.00 1.80 L8.76 5.97 L13.28 6.36 L9.85 9.33 L10.88 13.74 L7.00 11.40 L3.12 13.74 L4.15 9.33 L0.72 6.36 L5.24 5.97Z" stroke="#2b3233" stroke-width="1.3" fill="none" stroke-linejoin="round"/></svg>
<div class="row" style="left:730px;top:668px">Symbol</div>
<div class="hdot" style="left:700px;top:692px;width:10px"></div>
<svg width="16" height="16" viewBox="0 0 16 16" style="left:710px;top:684px"><rect x="0.7" y="2.7" width="12.6" height="11.6" rx="0.8" fill="#fff" stroke="#2b3233" stroke-width="1.3"/><path d="M5.2 2.7 V5.6 H13.3 M9.2 3 V5.6" stroke="#2b3233" stroke-width="1.1" fill="none"/><path d="M5.6 2.4 H8.8 M9.6 2.4 H13" stroke="#00703c" stroke-width="1.3"/></svg>
<div class="row" style="left:730px;top:684px">Tabbed layouts</div>
<div class="hdot" style="left:685px;top:708px;width:6px"></div>
<div class="exp" style="left:675px;top:704px"></div>
<svg width="16" height="16" viewBox="0 0 16 16" style="left:691px;top:700px"><path d="M0.6 12.5 V3.4 Q0.6 2.6 1.4 2.6 H4.6 L5.6 3.6 H12.7 Q13.5 3.6 13.5 4.4 V12.7 Q13.5 13.5 12.7 13.5 H1.4 Q0.6 13.5 0.6 12.7 Z" fill="#fff" stroke="#2b3233" stroke-width="1.2"/></svg>
<div class="row" style="left:711px;top:700px">Web</div>
<div class="hdot" style="left:700px;top:724px;width:10px"></div>
<svg width="16" height="16" viewBox="0 0 16 16" style="left:710px;top:716px"><path d="M1 5.6 H13 M1 10.4 H13" stroke="#00703c" stroke-width="0.9"/><circle cx="7" cy="8" r="6.3" stroke="#2b3233" stroke-width="1.3" fill="none"/><ellipse cx="7" cy="8" rx="2.6" ry="6.3" stroke="#2b3233" stroke-width="1.2" fill="none"/></svg>
<div class="row" style="left:730px;top:716px">Web browser</div>
</body></html>
